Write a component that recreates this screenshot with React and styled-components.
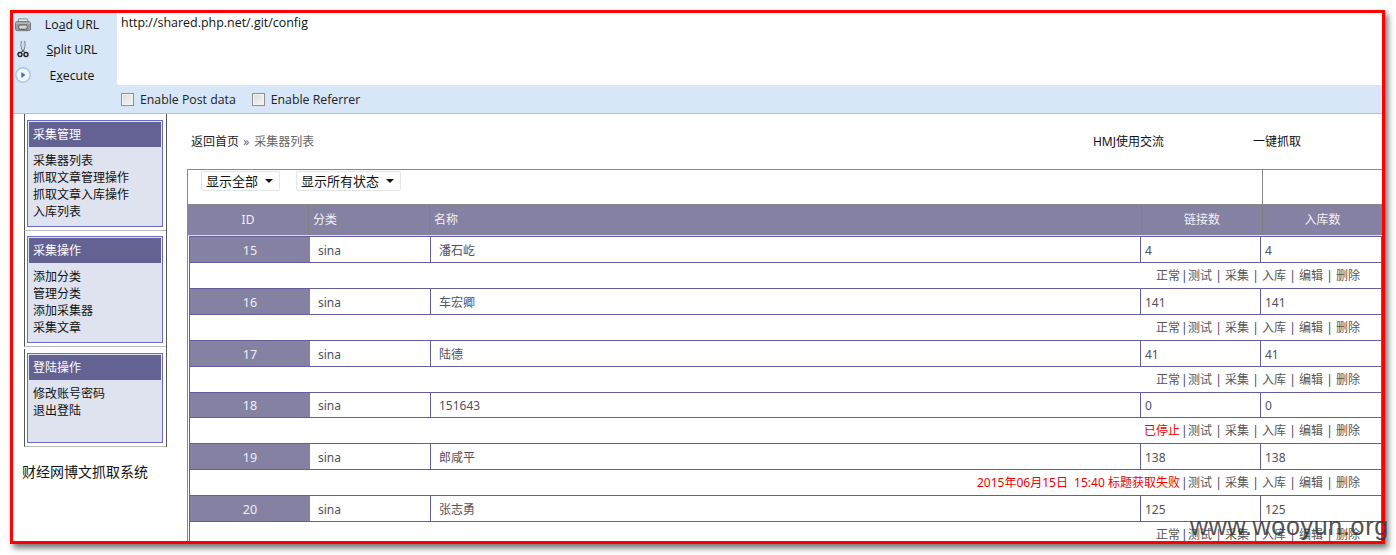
import React from 'react';
import styled, { createGlobalStyle } from 'styled-components';

const GlobalStyle = createGlobalStyle`
  html, body {
    margin: 0;
    padding: 0;
    background: #fff;
  }
  body {
    width: 1396px;
    height: 555px;
    overflow: hidden;
    font-family: "Noto Sans", "Noto Sans CJK SC", sans-serif;
    font-size: 12px;
  }
  * { box-sizing: border-box; }
`;

const Page = styled.div`
  position: relative;
  width: 1396px;
  height: 555px;
  padding: 10px 0 0 10px;
`;

const Frame = styled.div`
  width: 1375px;
  height: 534px;
  border: 3px solid #ff0000;
  box-shadow: 3px 4px 6px rgba(0, 0, 0, 0.55);
  overflow: hidden;
  background: #fff;
`;

const Watermark = styled.div`
  position: absolute;
  left: 1190px;
  top: 511px;
  font-family: "Liberation Sans", Arial, sans-serif;
  font-size: 25px;
  line-height: 30px;
  letter-spacing: 0.7px;
  color: rgba(50, 50, 50, 0.85);
  white-space: nowrap;
`;

/* hackbar */
const Header = styled.div`
  display: flex;
  height: 101px;
  background: #d8e7f7;
  border-bottom: 1px solid #b7bec6;
`;

const ButtonColumn = styled.div`
  width: 104px;
  flex: none;
  display: flex;
  flex-direction: column;
`;

const BarButton = styled.div`
  display: flex;
  align-items: center;
  height: ${p => p.$h}px;
  padding-left: 2px;
  font-family: "Open Sans", sans-serif;
  font-size: 12.3px;
  color: #111;
`;

const IconSlot = styled.div`
  width: 16px;
  height: 18px;
  flex: none;
  display: flex;
  align-items: center;
  justify-content: center;
`;

const BarLabel = styled.span`
  flex: 1;
  text-align: center;
  padding-right: 4px;
  u { text-underline-offset: 1px; }
`;

const RightColumn = styled.div`
  flex: 1;
  display: flex;
  flex-direction: column;
`;

const UrlBox = styled.div`
  height: 72px;
  background: #fff;
  border-bottom-left-radius: 3px;
  padding: 1px 4px;
  font-family: "Open Sans", sans-serif;
  font-size: 12.45px;
  line-height: 18px;
  color: #111;
`;

const OptionRow = styled.div`
  flex: 1;
  display: flex;
  align-items: center;
  padding: 1px 0 0 4px;
  gap: 16px;
`;

const OptionItem = styled.label`
  display: flex;
  align-items: center;
  gap: 6px;
  font-family: "Open Sans", sans-serif;
  font-size: 12.3px;
  color: #222;
`;

const CheckBox = styled.span`
  width: 13px;
  height: 13px;
  border: 1px solid #8e8f8f;
  background: linear-gradient(135deg, #dcdcdc, #f6f6f6);
  box-shadow: inset 0 0 0 1px #f4f4f4;
`;

/* page body */
const Body = styled.div`
  display: flex;
  align-items: flex-start;
`;

const Sidebar = styled.div`
  width: 174px;
  flex: none;
  padding-left: 9px;
`;

const SideStack = styled.div`
  width: 143px;
  margin-left: 2px;
  height: 333px;
  border-right: 1px solid #555;
`;

const SideBlock = styled.div`
  height: ${p => p.$h}px;
  margin-bottom: ${p => p.$gap || 0}px;
  padding: ${p => p.$top}px 0 0 2px;
  border-left: 1px solid #555;
  border-bottom: 1px solid #bbb;
`;

const SidePanel = styled.div`
  width: 136px;
  height: ${p => p.$h}px;
  padding: 1px;
  border: 1px solid #6a6ac8;
  background: #dfe3ef;
`;

const PanelTitle = styled.div`
  height: 25px;
  padding-left: 4px;
  line-height: 25px;
  color: #fff;
  background: #646193;
`;

const PanelLinks = styled.div`
  padding: 5px 0 0 4px;
  line-height: 17px;
  color: #111;
`;

const SystemName = styled.div`
  margin-top: 16px;
  font-size: 14px;
  line-height: 18px;
  color: #111;
`;

const Main = styled.div`
  flex: 1;
  min-width: 0;
`;

const TopLine = styled.div`
  height: 55px;
  padding: 19px 81px 0 4px;
  display: flex;
  justify-content: space-between;
  line-height: 18px;
  color: #222;
`;

const Crumbs = styled.div`
  span { color: #666; margin-left: 1px; word-spacing: 2px; }
`;

const TopLinks = styled.div`
  display: flex;
  gap: 89px;
  color: #111;
`;

const Listing = styled.div`
  border-left: 1px solid #888;
  border-top: 1px solid #888;
`;

const FilterRow = styled.div`
  height: 34px;
  display: flex;
  justify-content: space-between;
`;

const Filters = styled.div`
  display: flex;
  gap: 16px;
  padding: 1px 0 0 13px;
  align-items: flex-start;
`;

const FakeSelect = styled.div`
  height: 20px;
  padding: 0 6px 2px 4px;
  display: flex;
  align-items: center;
  gap: 7px;
  border: 1px solid #e2e5ea;
  border-radius: 2px;
  font-size: 13px;
  color: #111;
  &::after {
    content: "";
    border: 4px solid transparent;
    border-top: 4px solid #111;
    border-bottom: none;
    margin-top: 2px;
  }
`;

const FilterSpare = styled.div`
  width: 120px;
  border-left: 1px solid #888;
`;

const HeadRow = styled.div`
  display: grid;
  grid-template-columns: 121px 121px 712px 121px 119px;
  height: 31px;
  border-top: 1px solid #888;
  background: #8581a3;
  color: #f0f0f5;
`;

const HeadCell = styled.div`
  line-height: 29px;
  padding-left: ${p => (p.$center ? 0 : 4)}px;
  text-align: ${p => (p.$center ? 'center' : 'left')};
  border-right: 1px solid #807f80;
  &:last-child { border-right: none; }
`;

const HeadGap = styled.div`
  height: 1px;
  background: #ddd;
`;

const Entry = styled.div`
  margin-left: 1px;
  border-left: 1px solid #645f9b;
  border-right: 1px solid #645f9b;
`;

const DataRow = styled.div`
  display: grid;
  grid-template-columns: 120px 120px 710px 120px 121px;
  grid-auto-rows: ${p => (p.$short ? 24 : 25)}px;
  line-height: ${p => (p.$short ? 26 : 28)}px;
  border-top: 1px solid #645f9b;
  color: #50505a;
`;

const IdCell = styled.div`
  background: #8581a3;
  color: #eef0f5;
  text-align: center;
  font-size: 12.5px;
  overflow: hidden;
`;

const Cell = styled.div`
  padding-left: ${p => p.$pad}px;
  border-left: ${p => (p.$line ? '1px solid #645f9b' : 'none')};
  font-size: 12px;
  overflow: hidden;
`;

const ActionRow = styled.div`
  height: 26px;
  border-top: 1px solid #645f9b;
  padding-right: 21px;
  display: flex;
  justify-content: flex-end;
  line-height: 25px;
  color: #555;
`;

const Status = styled.span`
  color: ${p => (p.$bad ? '#f00000' : '#555')};
  white-space: pre;
`;

const Bar = styled.span`
  width: ${p => (p.$first ? 8 : 13)}px;
  text-align: ${p => (p.$first ? 'left' : 'center')};
  padding-left: ${p => (p.$first ? 1 : 0)}px;
  color: #445;
`;

const PrintIcon = () => (
  <svg width="17" height="15" viewBox="0 0 17 15">
    <path d="M4 1.5h9l1 3H3z" fill="#e4e6e8" stroke="#8a8d90" />
    <rect x="0.5" y="4.5" width="16" height="9.5" rx="2" fill="#9a9da0" stroke="#6d7073" />
    <rect x="4" y="8" width="9" height="4.5" rx="1.5" fill="#d4d6d8" stroke="#4e5154" />
    <path d="M1 6h15" stroke="#c6c8ca" />
  </svg>
);

const ScissorsIcon = () => (
  <svg width="12" height="18" viewBox="0 0 12 18">
    <path d="M4.5 1C3.6 4 4 8 5.6 11M7.5 1c.9 3 .5 7-1.1 10" fill="none" stroke="#7d8a96" strokeWidth="1.1" />
    <path d="M6 1.5v7" stroke="#c4ccd4" />
    <circle cx="3" cy="14.5" r="2" fill="none" stroke="#222" strokeWidth="1.4" />
    <circle cx="9" cy="14.5" r="2" fill="none" stroke="#222" strokeWidth="1.4" />
    <path d="M4 12.6l2-2 2 2" fill="none" stroke="#222" />
  </svg>
);

const PlayIcon = () => (
  <svg width="16" height="16" viewBox="0 0 16 16">
    <circle cx="8" cy="8" r="7.2" fill="#f3f6fb" stroke="#a9c4e6" strokeWidth="1.4" />
    <path d="M6.4 5l4 3-4 3z" fill="#3d6fb5" />
  </svg>
);

const menus = [
  { title: '采集管理', links: ['采集器列表', '抓取文章管理操作', '抓取文章入库操作', '入库列表'], h: 117, top: 6, panel: 107 },
  { title: '采集操作', links: ['添加分类', '管理分类', '添加采集器', '采集文章'], h: 116, top: 5, panel: 107, gap: 2 },
  { title: '登陆操作', links: ['修改账号密码', '退出登陆'], h: 98, top: 4, panel: 90 },
];

const rows = [
  { id: 15, name: '潘石屹', link: 4, stock: 4, status: '正常' },
  { id: 16, name: '车宏卿', link: 141, stock: 141, status: '正常' },
  { id: 17, name: '陆德', link: 41, stock: 41, status: '正常' },
  { id: 18, name: '151643', link: 0, stock: 0, status: '已停止', bad: true, short: true },
  { id: 19, name: '郎咸平', link: 138, stock: 138, status: '2015年06月15日  15:40 标题获取失败', bad: true },
  { id: 20, name: '张志勇', link: 125, stock: 125, status: '正常' },
];

const actions = ['测试', '采集', '入库', '编辑', '删除'];

export default function App() {
  return (
    <Page>
      <GlobalStyle />
      <Frame>
        <Header>
          <ButtonColumn>
            <BarButton $h={23}>
              <IconSlot><PrintIcon /></IconSlot>
              <BarLabel>Lo<u>a</u>d URL</BarLabel>
            </BarButton>
            <BarButton $h={26}>
              <IconSlot><ScissorsIcon /></IconSlot>
              <BarLabel><u>S</u>plit URL</BarLabel>
            </BarButton>
            <BarButton $h={26}>
              <IconSlot><PlayIcon /></IconSlot>
              <BarLabel>E<u>x</u>ecute</BarLabel>
            </BarButton>
          </ButtonColumn>
          <RightColumn>
            <UrlBox>http://shared.php.net/.git/config</UrlBox>
            <OptionRow>
              <OptionItem><CheckBox />Enable Post data</OptionItem>
              <OptionItem><CheckBox />Enable Referrer</OptionItem>
            </OptionRow>
          </RightColumn>
        </Header>
        <Body>
          <Sidebar>
            <SideStack>
              {menus.map(m => (
                <SideBlock key={m.title} $h={m.h} $top={m.top} $gap={m.gap}>
                  <SidePanel $h={m.panel}>
                    <PanelTitle>{m.title}</PanelTitle>
                    <PanelLinks>
                      {m.links.map(l => <div key={l}>{l}</div>)}
                    </PanelLinks>
                  </SidePanel>
                </SideBlock>
              ))}
            </SideStack>
            <SystemName>财经网博文抓取系统</SystemName>
          </Sidebar>
          <Main>
            <TopLine>
              <Crumbs>返回首页 <span>» 采集器列表</span></Crumbs>
              <TopLinks>
                <div>HMJ使用交流</div>
                <div>一键抓取</div>
              </TopLinks>
            </TopLine>
            <Listing>
              <FilterRow>
                <Filters>
                  <FakeSelect>显示全部</FakeSelect>
                  <FakeSelect>显示所有状态</FakeSelect>
                </Filters>
                <FilterSpare />
              </FilterRow>
              <HeadRow>
                <HeadCell $center>ID</HeadCell>
                <HeadCell>分类</HeadCell>
                <HeadCell>名称</HeadCell>
                <HeadCell $center>链接数</HeadCell>
                <HeadCell $center>入库数</HeadCell>
              </HeadRow>
              <HeadGap />
              <Entry>
                {rows.map(r => (
                  <React.Fragment key={r.id}>
                    <DataRow $short={r.short}>
                      <IdCell>{r.id}</IdCell>
                      <Cell $pad={8}>sina</Cell>
                      <Cell $pad={8} $line>{r.name}</Cell>
                      <Cell $pad={4} $line>{r.link}</Cell>
                      <Cell $pad={4} $line>{r.stock}</Cell>
                    </DataRow>
                    <ActionRow>
                      <Status $bad={r.bad}>{r.status}</Status>
                      <Bar $first>|</Bar>
                      {actions.map((a, i) => (
                        <React.Fragment key={a}>
                          {i > 0 && <Bar>|</Bar>}
                          <span>{a}</span>
                        </React.Fragment>
                      ))}
                    </ActionRow>
                  </React.Fragment>
                ))}
              </Entry>
            </Listing>
          </Main>
        </Body>
      </Frame>
      <Watermark>www.wooyun.org</Watermark>
    </Page>
  );
}
